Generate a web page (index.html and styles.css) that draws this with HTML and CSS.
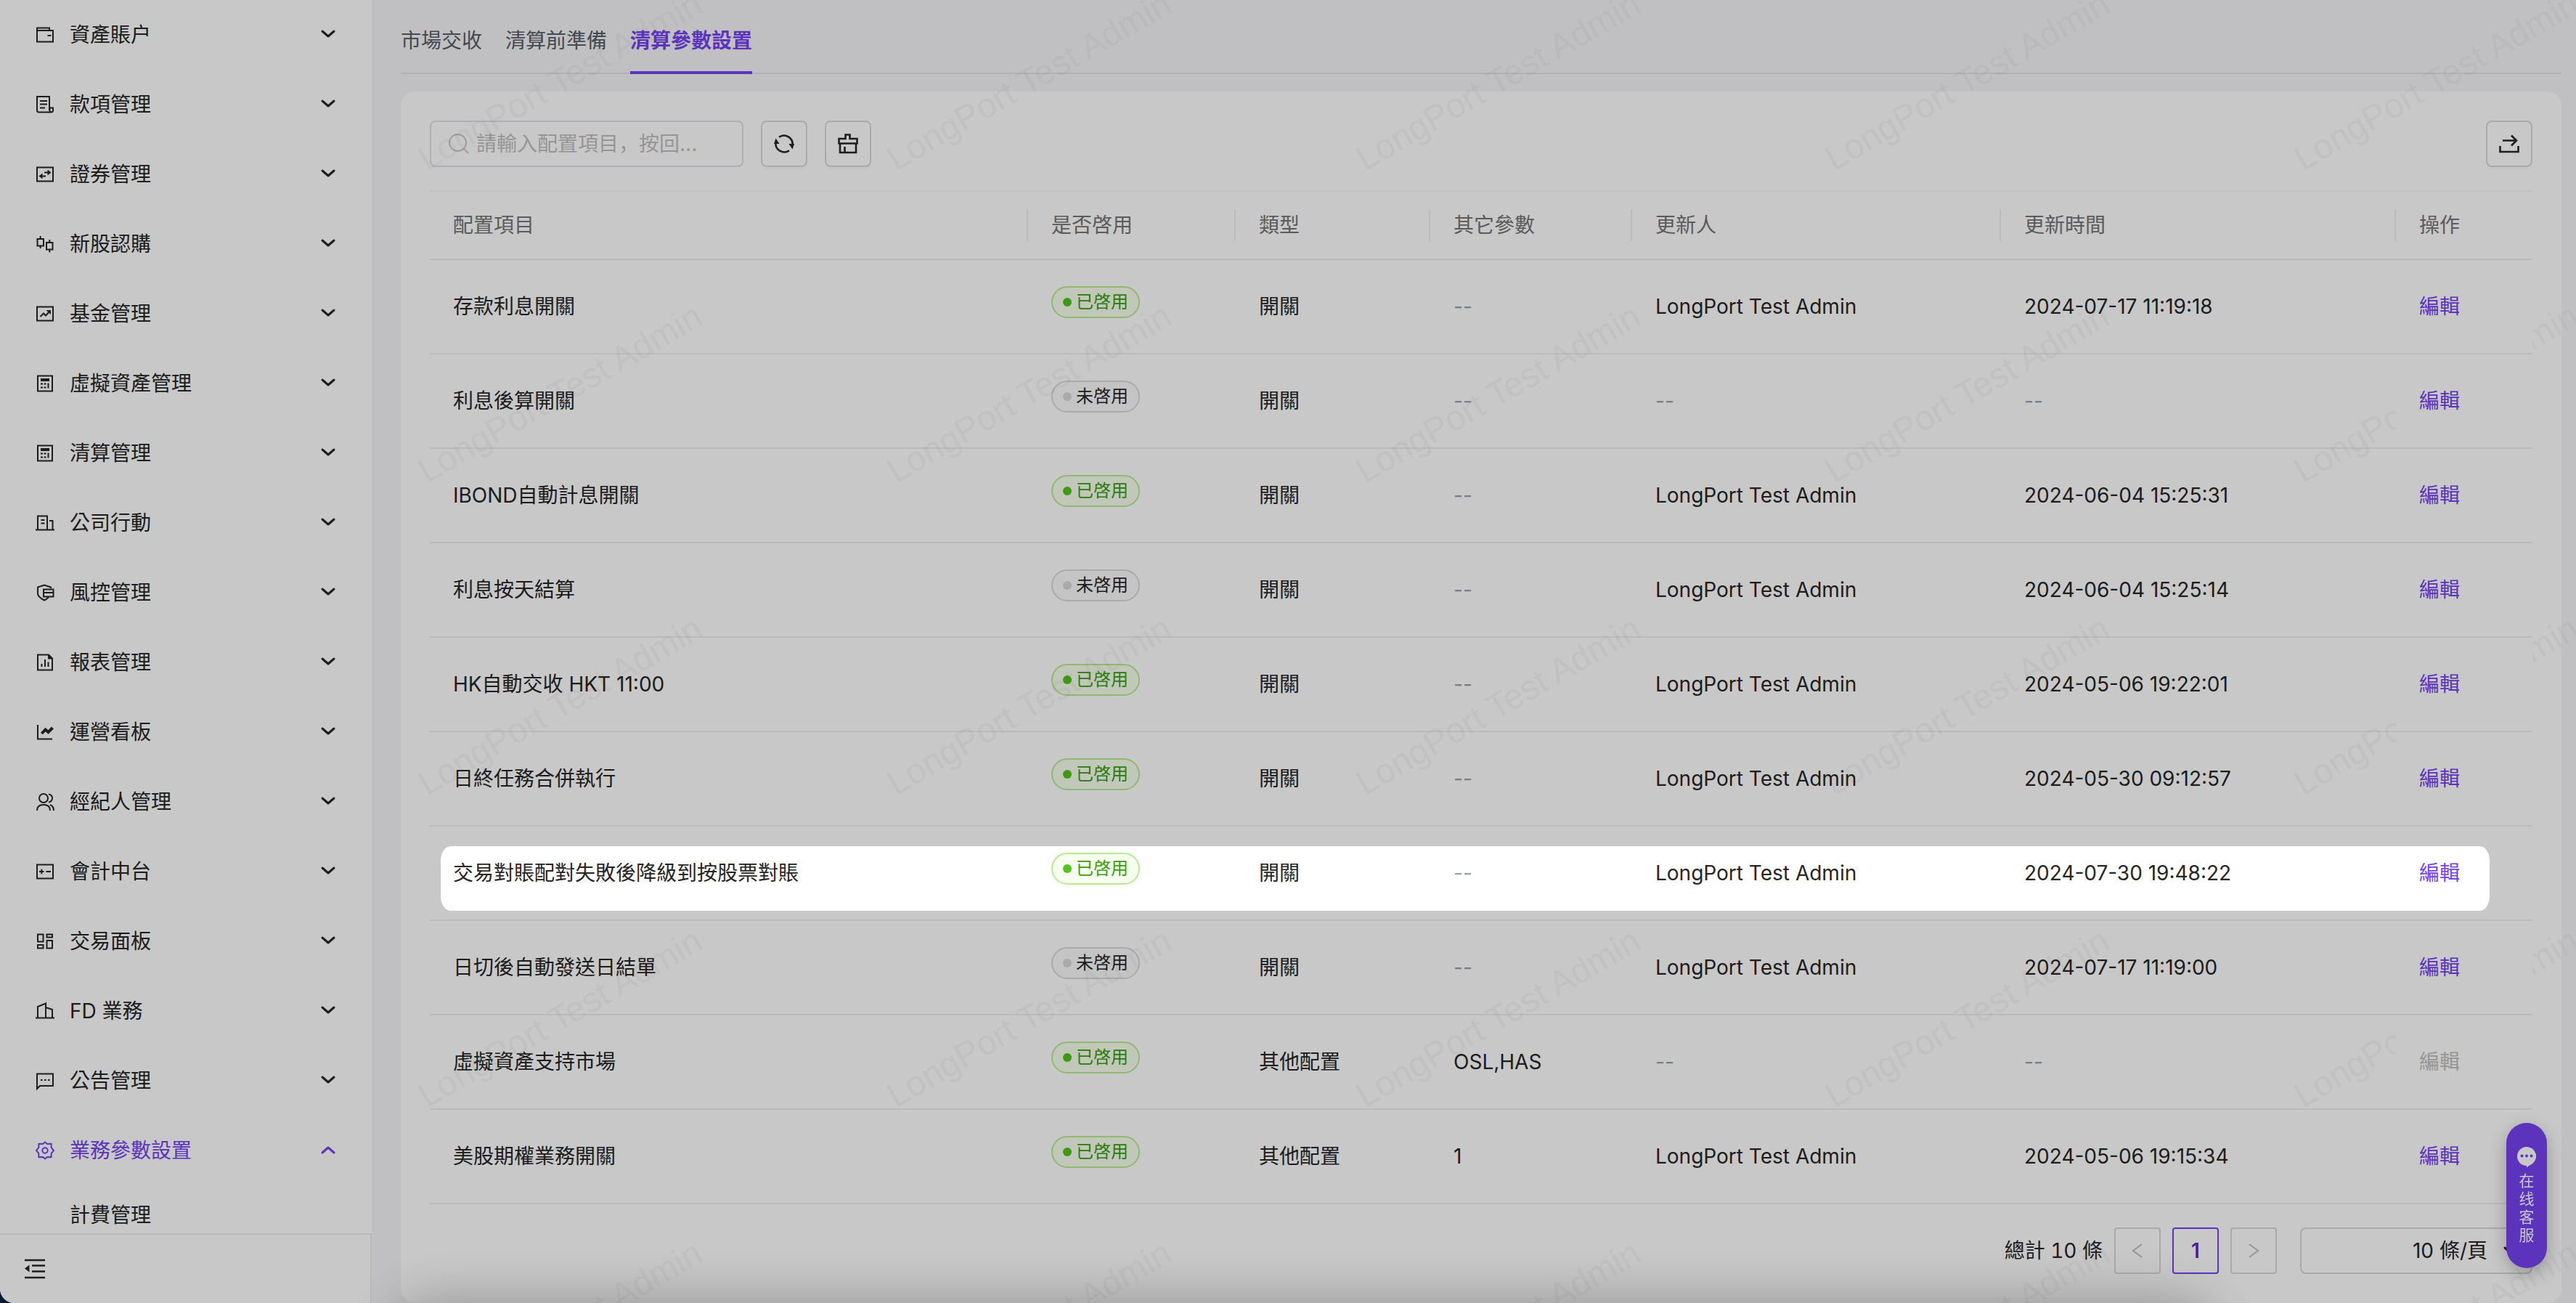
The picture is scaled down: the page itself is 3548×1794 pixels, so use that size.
FILE: index.html
```html
<!DOCTYPE html>
<html lang="zh-Hant">
<head>
<meta charset="utf-8">
<meta name="viewport" content="width=device-width, initial-scale=1">
<title>清算參數設置</title>
<link rel="stylesheet" href="styles.css">
</head>
<body>
<svg class="sprite" aria-hidden="true">
  <defs>
    <symbol id="i-down" viewBox="0 0 24 24"><path d="M4 8l8 7 8-7" fill="none" stroke="currentColor" stroke-width="3" stroke-linecap="round" stroke-linejoin="round"/></symbol>
    <symbol id="i-wallet" viewBox="0 0 28 28"><path d="M3 8V4.500h17V8M3 8h22v15.500H3zM17.500 15h5" /></symbol>
    <symbol id="i-bill" viewBox="0 0 28 28"><path d="M20 22V3H3v19q0 2.500 2.500 2.500H22q3 0 3-2.500v-3.500h-4.500V22q0 2.500 2 2.500M7 9h10M7 13.500h10M7 18.500h7"/></symbol>
    <symbol id="i-swap" viewBox="0 0 28 28"><path d="M3 4.500h22v19H3zM13 11.500h6M9 16.500h6"/><path class="fill" d="M17.500 7.500l5 4-5 4zM10.500 12.500l-5 4 5 4z"/></symbol>
    <symbol id="i-candle" viewBox="0 0 28 28"><path d="M3.500 7H12v9.500H3.500zM7.700 3v4M7.700 16.500v3.500M16 12h8.500v9.500H16zM20.300 8v4M20.300 21.500v4"/></symbol>
    <symbol id="i-fund" viewBox="0 0 28 28"><path d="M3 4.500h22v19H3zM7.500 18l4.500-4.500 3 3 6-6.500"/><path class="fill" d="M15.500 9h6.500v6z"/></symbol>
    <symbol id="i-calc" viewBox="0 0 28 28"><path d="M4 3.500h20v21H4zM8 14.500h3M12.500 14.500h3M8 19.500h3M12.500 19.500h3M18.500 13.500v7"/><path class="fill" d="M8 7h12v4H8z"/></symbol>
    <symbol id="i-office" viewBox="0 0 28 28"><path d="M1 23.500h26M4 23V4.500h13V23M8.500 10h5M8.500 14.500h5M20 11h4.500v12"/></symbol>
    <symbol id="i-shield" viewBox="0 0 28 28"><path d="M22 8V6.500L13 3.500 4 6.500V15q0 5 9 9.500 3-1.500 6-4M12 9.500h13.500v10H12zM12 14h13"/></symbol>
    <symbol id="i-report" viewBox="0 0 28 28"><path d="M4 3.500h15l5 5v16H4zM9.500 16v4M14 10v10M18.500 13.500v6.500"/><path class="fill" d="M18 3l6.500 6.500H18z"/></symbol>
    <symbol id="i-line" viewBox="0 0 28 28"><path d="M4 4v19.500h20"/><path d="M9.500 16l5-5.500 4 3.500 6-6" class="thick"/></symbol>
    <symbol id="i-users" viewBox="0 0 28 28"><circle cx="12" cy="9" r="6"/><path d="M3 26q0-8 9-8t9 8M19 3.500q5 1 5 5.500t-5 5.500M21 18q5 2 5 8"/></symbol>
    <symbol id="i-ledger" viewBox="0 0 28 28"><path d="M3 4.500h22v19H3zM6 14h6.500M9.300 10.700v6.600M15.500 14h6.500"/></symbol>
    <symbol id="i-grid" viewBox="0 0 28 28"><path d="M4 4.500h7.500v10H4zM4 19h7.500v4.500H4zM16.500 4.500H24v4h-7.500zM16.500 13H24v10.500h-7.500z"/></symbol>
    <symbol id="i-towers" viewBox="0 0 28 28"><path d="M1 23.500h26M4 23V8l11-4.500V23M15 9l9 3v11"/></symbol>
    <symbol id="i-msg" viewBox="0 0 28 28"><path d="M3 25V4.500h22v16.500H7z"/><path d="M8 13h2.500M13 13h2.500M18 13h2.500"/></symbol>
    <symbol id="i-gear" viewBox="0 0 28 28"><path d="M14 2.500l3 2.600 5.500-.2.300 5.300 3.200 3.800-3.200 3.800-.3 5.300-5.500-.2-3 2.600-3-2.600-5.500.2-.3-5.300L2 14l3.200-3.800.3-5.300 5.500.2z"/><circle cx="14" cy="14" r="3.700"/></symbol>
  </defs>
</svg>
<div class="app">
  <aside class="side">
    <nav class="menu" aria-label="主選單">
      <button class="item"><svg class="ico"><use href="#i-wallet"/></svg><span>資產賬户</span><svg class="arrow"><use href="#i-down"/></svg></button>
      <button class="item"><svg class="ico"><use href="#i-bill"/></svg><span>款項管理</span><svg class="arrow"><use href="#i-down"/></svg></button>
      <button class="item"><svg class="ico"><use href="#i-swap"/></svg><span>證券管理</span><svg class="arrow"><use href="#i-down"/></svg></button>
      <button class="item"><svg class="ico"><use href="#i-candle"/></svg><span>新股認購</span><svg class="arrow"><use href="#i-down"/></svg></button>
      <button class="item"><svg class="ico"><use href="#i-fund"/></svg><span>基金管理</span><svg class="arrow"><use href="#i-down"/></svg></button>
      <button class="item"><svg class="ico"><use href="#i-calc"/></svg><span>虛擬資產管理</span><svg class="arrow"><use href="#i-down"/></svg></button>
      <button class="item"><svg class="ico"><use href="#i-calc"/></svg><span>清算管理</span><svg class="arrow"><use href="#i-down"/></svg></button>
      <button class="item"><svg class="ico"><use href="#i-office"/></svg><span>公司行動</span><svg class="arrow"><use href="#i-down"/></svg></button>
      <button class="item"><svg class="ico"><use href="#i-shield"/></svg><span>風控管理</span><svg class="arrow"><use href="#i-down"/></svg></button>
      <button class="item"><svg class="ico"><use href="#i-report"/></svg><span>報表管理</span><svg class="arrow"><use href="#i-down"/></svg></button>
      <button class="item"><svg class="ico"><use href="#i-line"/></svg><span>運營看板</span><svg class="arrow"><use href="#i-down"/></svg></button>
      <button class="item"><svg class="ico"><use href="#i-users"/></svg><span>經紀人管理</span><svg class="arrow"><use href="#i-down"/></svg></button>
      <button class="item"><svg class="ico"><use href="#i-ledger"/></svg><span>會計中台</span><svg class="arrow"><use href="#i-down"/></svg></button>
      <button class="item"><svg class="ico"><use href="#i-grid"/></svg><span>交易面板</span><svg class="arrow"><use href="#i-down"/></svg></button>
      <button class="item"><svg class="ico"><use href="#i-towers"/></svg><span>FD 業務</span><svg class="arrow"><use href="#i-down"/></svg></button>
      <button class="item"><svg class="ico"><use href="#i-msg"/></svg><span>公告管理</span><svg class="arrow"><use href="#i-down"/></svg></button>
      <button class="item open"><svg class="ico"><use href="#i-gear"/></svg><span>業務參數設置</span><svg class="arrow"><use href="#i-down"/></svg></button>
      <a class="sub" href="#fees">計費管理</a>
    </nav>
    <div class="side-foot">
      <button class="collapse" aria-label="收起選單"><svg viewBox="0 0 32 32"><path d="M2 4h28M12 11.500h18M12 19.500h18M2 28h28" fill="none" stroke="currentColor" stroke-width="2.400"/><path d="M8.500 10.500v10L2 15.500z" fill="currentColor"/></svg></button>
    </div>
  </aside>

  <main class="main">
    <nav class="tabs" aria-label="清算">
      <a href="#market">市場交收</a>
      <a href="#prepare">清算前準備</a>
      <a class="on" href="#params" aria-current="page">清算參數設置</a>
    </nav>

    <section class="card">
      <div class="tools">
        <label class="search">
          <svg viewBox="0 0 32 32" aria-hidden="true"><circle cx="14.500" cy="14.500" r="11.500"/><path d="M23 23l6 6"/></svg>
          <input type="text" aria-label="配置項目" lang="zh-Hans" placeholder="請輸入配置項目，按回...">
        </label>
        <button class="tool" aria-label="刷新"><svg viewBox="0 0 28 28"><path d="M7 4.800A11.800 11.800 0 0 1 25.500 16M21 23.200A11.800 11.800 0 0 1 2.500 12"/><path class="fill" d="M20.500 14H28l-2.500 7.500zM0 14h7.500L2.500 6.500z"/></svg></button>
        <button class="tool" aria-label="清空"><svg viewBox="0 0 28 28"><path d="M10.500 7V1.500h6V7h10v6.500h-25V7zM3 13.500h22V26H3zM9.500 18v8"/></svg></button>
        <button class="tool export" aria-label="導出"><svg viewBox="0 0 28 28"><path d="M5 9.500h18M17 2.500l7 7-7 7M1.500 17v8h25v-8"/></svg></button>
      </div>

      <table class="grid">
        <colgroup><col class="c1"><col class="c2"><col class="c3"><col class="c4"><col class="c5"><col class="c6"><col class="c7"></colgroup>
        <thead>
          <tr><th>配置項目</th><th>是否啓用</th><th>類型</th><th>其它參數</th><th>更新人</th><th>更新時間</th><th class="fix">操作</th></tr>
        </thead>
        <tbody>
          <tr><td>存款利息開關</td><td><span class="tag yes">已啓用</span></td><td>開關</td><td class="none">--</td><td>LongPort Test Admin</td><td>2024-07-17 11:19:18</td><td class="fix"><a href="#edit">編輯</a></td></tr>
          <tr><td>利息後算開關</td><td><span class="tag">未啓用</span></td><td>開關</td><td class="none">--</td><td class="none">--</td><td class="none">--</td><td class="fix"><a href="#edit">編輯</a></td></tr>
          <tr><td>IBOND自動計息開關</td><td><span class="tag yes">已啓用</span></td><td>開關</td><td class="none">--</td><td>LongPort Test Admin</td><td>2024-06-04 15:25:31</td><td class="fix"><a href="#edit">編輯</a></td></tr>
          <tr><td>利息按天結算</td><td><span class="tag">未啓用</span></td><td>開關</td><td class="none">--</td><td>LongPort Test Admin</td><td>2024-06-04 15:25:14</td><td class="fix"><a href="#edit">編輯</a></td></tr>
          <tr><td>HK自動交收 HKT 11:00</td><td><span class="tag yes">已啓用</span></td><td>開關</td><td class="none">--</td><td>LongPort Test Admin</td><td>2024-05-06 19:22:01</td><td class="fix"><a href="#edit">編輯</a></td></tr>
          <tr><td>日終任務合併執行</td><td><span class="tag yes">已啓用</span></td><td>開關</td><td class="none">--</td><td>LongPort Test Admin</td><td>2024-05-30 09:12:57</td><td class="fix"><a href="#edit">編輯</a></td></tr>
          <tr class="focus"><td>交易對賬配對失敗後降級到按股票對賬</td><td><span class="tag yes">已啓用</span></td><td>開關</td><td class="none">--</td><td>LongPort Test Admin</td><td>2024-07-30 19:48:22</td><td class="fix"><a href="#edit">編輯</a></td></tr>
          <tr><td>日切後自動發送日結單</td><td><span class="tag">未啓用</span></td><td>開關</td><td class="none">--</td><td>LongPort Test Admin</td><td>2024-07-17 11:19:00</td><td class="fix"><a href="#edit">編輯</a></td></tr>
          <tr><td>虛擬資產支持市場</td><td><span class="tag yes">已啓用</span></td><td>其他配置</td><td>OSL,HAS</td><td class="none">--</td><td class="none">--</td><td class="fix"><a class="off" aria-disabled="true">編輯</a></td></tr>
          <tr><td>美股期權業務開關</td><td><span class="tag yes">已啓用</span></td><td>其他配置</td><td>1</td><td>LongPort Test Admin</td><td>2024-05-06 19:15:34</td><td class="fix"><a href="#edit">編輯</a></td></tr>
        </tbody>
      </table>

      <div class="pager">
        <span class="total">總計 10 條</span>
        <button class="page" aria-label="上一頁" disabled><svg viewBox="0 0 24 24"><path d="M18 3L6 12l12 9"/></svg></button>
        <button class="page now">1</button>
        <button class="page" aria-label="下一頁" disabled><svg viewBox="0 0 24 24"><path d="M6 3l12 9-12 9"/></svg></button>
        <div class="size">
          <select aria-label="每頁條數"><option>10 條/頁</option></select>
          <svg class="arrow"><use href="#i-down"/></svg>
        </div>
      </div>
    </section>

    <svg class="mark" aria-hidden="true">
      <defs>
        <pattern id="wm" x="40" y="-160" width="646" height="430" patternUnits="userSpaceOnUse">
          <text x="0" y="0" transform="translate(36 396) rotate(-30)">LongPort Test Admin</text>
        </pattern>
      </defs>
      <rect width="100%" height="100%" fill="url(#wm)"/>
    </svg>
  </main>

  <button class="chat">
    <svg viewBox="0 0 28 30" aria-hidden="true"><path fill="#fff" d="M14 1a13 13 0 0 1 7 24q-4 1.500-7 4.500V27A13 13 0 0 1 14 1z"/><g fill="#7442f1"><circle cx="7.500" cy="13.500" r="2"/><circle cx="14" cy="13.500" r="2"/><circle cx="20.500" cy="13.500" r="2"/></g></svg>
    <span lang="zh-Hans">在线客服</span>
  </button>
  <div class="shade"></div>
</div>
</body>
</html>
```
FILE: styles.css
```css
* { box-sizing: border-box; }

html { height: 100%; background: #061a33; }

body {
  margin: 0;
  height: 100%;
  font: 28px/44px Inter, "Noto Sans CJK TC", sans-serif;
  color: #262626;
}

button, input, select { font: inherit; color: inherit; }
button { padding: 0; border: 0; background: none; }
a { color: inherit; text-decoration: none; }
svg { display: block; flex: none; }
.sprite { position: absolute; width: 0; height: 0; }

.app {
  position: relative;
  display: flex;
  min-height: 100%;
  overflow: hidden;
  background: #f5f5f8;
  border-bottom-left-radius: 20px;
}

/* sidebar */
.side {
  display: flex;
  flex-direction: column;
  width: 512px;
  height: 100vh;
  background: #fff;
}

.menu { flex: 1; min-height: 0; overflow: hidden; }

.item {
  display: flex;
  align-items: center;
  width: 100%;
  height: 96px;
  padding: 0 48px;
  text-align: left;
}

.item span { flex: 1; margin-left: 20px; }

.ico { width: 28px; height: 28px; color: #262626; }
.open, .open .ico { color: #7442f1; }

symbol path, symbol circle { fill: none; stroke: currentColor; stroke-width: 2; }
symbol .fill { fill: currentColor; stroke: none; }
symbol .thick { stroke-width: 4; }
#i-down path { stroke-width: 3; }

.arrow { width: 24px; height: 24px; }
.item .arrow { margin-bottom: 2px; }
.open .arrow { transform: rotate(180deg); }

.sub { display: flex; align-items: center; height: 82px; padding-left: 96px; }

.side-foot {
  display: flex;
  align-items: center;
  height: 96px;
  padding-left: 32px;
  border-top: 2px solid #ececec;
  border-right: 2px solid #ececec;
}

.collapse svg { width: 32px; height: 32px; }

/* content */
.main {
  position: relative;
  flex: 1;
  min-width: 0;
  padding: 0 20px 0 40px;
}

.tabs {
  display: flex;
  gap: 32px;
  height: 102px;
  margin-bottom: 24px;
  border-bottom: 2px solid #e4e4e7;
  color: #595e66;
}

.tabs a { height: 102px; padding-top: 34px; }
.tabs .on { color: #7442f1; font-weight: 600; border-bottom: 4px solid #7442f1; }

.card {
  padding: 40px;
  border-radius: 20px;
  background: #fff;
}

.tools { display: flex; gap: 24px; margin-bottom: 32px; }

.search, .tool {
  display: flex;
  align-items: center;
  height: 64px;
  border: 2px solid #d9d9d9;
  border-radius: 8px;
}

.search { width: 432px; padding: 0 22px; gap: 8px; border-color: #e0e0e6; }
.search svg { width: 32px; height: 32px; fill: none; stroke: #c8cad2; stroke-width: 2; }
.search input {
  flex: 1;
  min-width: 0;
  padding: 0;
  border: 0;
  outline: 0;
  background: none;
  font-family: Inter, "Noto Sans CJK SC", sans-serif;
}
.search input::placeholder { color: #bfbfbf; opacity: 1; }

.tool { justify-content: center; width: 64px; box-shadow: 0 4px 0 rgba(0, 0, 0, .02); }
.tool svg { width: 28px; height: 28px; fill: none; stroke: #262626; stroke-width: 2.600; }
.tool .fill { fill: #262626; stroke: none; }
.export { margin-left: auto; }

/* table */
.grid {
  width: 100%;
  table-layout: fixed;
  border-collapse: separate;
  border-spacing: 0;
  border-top: 2px solid #f5f5f5;
}

.c1 { width: 824px; }
.c2 { width: 286px; }
.c3 { width: 268px; }
.c4 { width: 278px; }
.c5 { width: 508px; }
.c6 { width: 544px; }
.c7 { width: 188px; }

.grid th, .grid td {
  padding: 0 32px;
  border-bottom: 2px solid #efefef;
  text-align: left;
  white-space: nowrap;
}

.grid th {
  height: 94px;
  color: #757575;
  font-weight: 400;
  background: linear-gradient(#efefef, #efefef) right center / 2px 44px no-repeat;
}

.grid th.fix { background: #fff; }
.grid td { height: 130px; }
.grid .none { color: #9aa0ae; }

.fix { position: sticky; right: 0; z-index: 2; background: #fff; }
.fix a { color: #7442f1; }
.fix .off { color: #bfbfbf; }

.tag {
  display: inline-flex;
  align-items: center;
  gap: 6px;
  height: 44px;
  margin-bottom: 12px;
  padding: 0 14px;
  border: 2px solid #d9d9d9;
  border-radius: 22px;
  background: #fafafa;
  font-size: 24px;
  vertical-align: middle;
}

.tag::before {
  content: "";
  width: 12px;
  height: 12px;
  border-radius: 50%;
  background: #d9d9d9;
}

.yes { color: #389e0d; background: #f6ffed; border-color: #b7eb8f; }
.yes::before { background: #52c41a; }

/* spotlight: the row stays lit, the rest of the page is dimmed */
.focus { position: relative; }
.focus td:first-child::after {
  content: "";
  position: absolute;
  z-index: 9;
  inset: 27px 59px 14px 15px;
  border-radius: 14px / 20px;
  box-shadow: 0 0 0 5000px rgba(0, 0, 0, .216);
  pointer-events: none;
}

/* pagination */
.pager {
  display: flex;
  align-items: center;
  justify-content: flex-end;
  gap: 16px;
  margin-top: 32px;
}

.total { font-variant-numeric: tabular-nums; }

.page {
  display: flex;
  align-items: center;
  justify-content: center;
  width: 64px;
  height: 64px;
  border: 2px solid #d9d9d9;
  border-radius: 4px;
}

.page svg { width: 24px; height: 24px; fill: none; stroke: #bfbfbf; stroke-width: 2; }
.now { border-color: #7442f1; color: #5a28d0; font-weight: 600; }

.size { display: flex; align-items: center; width: 320px; margin-left: 16px; }
.size select {
  width: 100%;
  height: 64px;
  padding: 0 60px 0 20px;
  border: 2px solid #d9d9d9;
  border-radius: 8px;
  background: none;
  appearance: none;
  text-align: right;
  text-align-last: right;
}
.size .arrow { margin-left: -42px; margin-right: 18px; }

/* watermark */
.mark {
  position: absolute;
  inset: 0;
  z-index: 1;
  width: 100%;
  height: 100%;
  pointer-events: none;
}

.mark text { font: 48px "Liberation Sans", Arial, sans-serif; fill: rgba(0, 0, 0, .03); }

/* floating support button */
.chat {
  position: absolute;
  right: 40px;
  bottom: 48px;
  z-index: 3;
  display: flex;
  flex-direction: column;
  align-items: center;
  gap: 4px;
  width: 56px;
  height: 200px;
  padding-top: 32px;
  border-radius: 28px;
  background: #7442f1;
  box-shadow: 0 8px 24px rgba(0, 0, 0, .25);
  color: #fff;
}

.chat svg { width: 28px; height: 30px; }
.chat span { width: 22px; font: 21px/25px "Noto Sans CJK SC", sans-serif; }

/* soft shadow rising from the lower edge */
.shade {
  position: absolute;
  left: 552px;
  right: 508px;
  bottom: -200px;
  z-index: 4;
  height: 200px;
  border-radius: 20px;
  box-shadow: 0 0 80px rgba(0, 0, 0, .28);
  pointer-events: none;
}
```
